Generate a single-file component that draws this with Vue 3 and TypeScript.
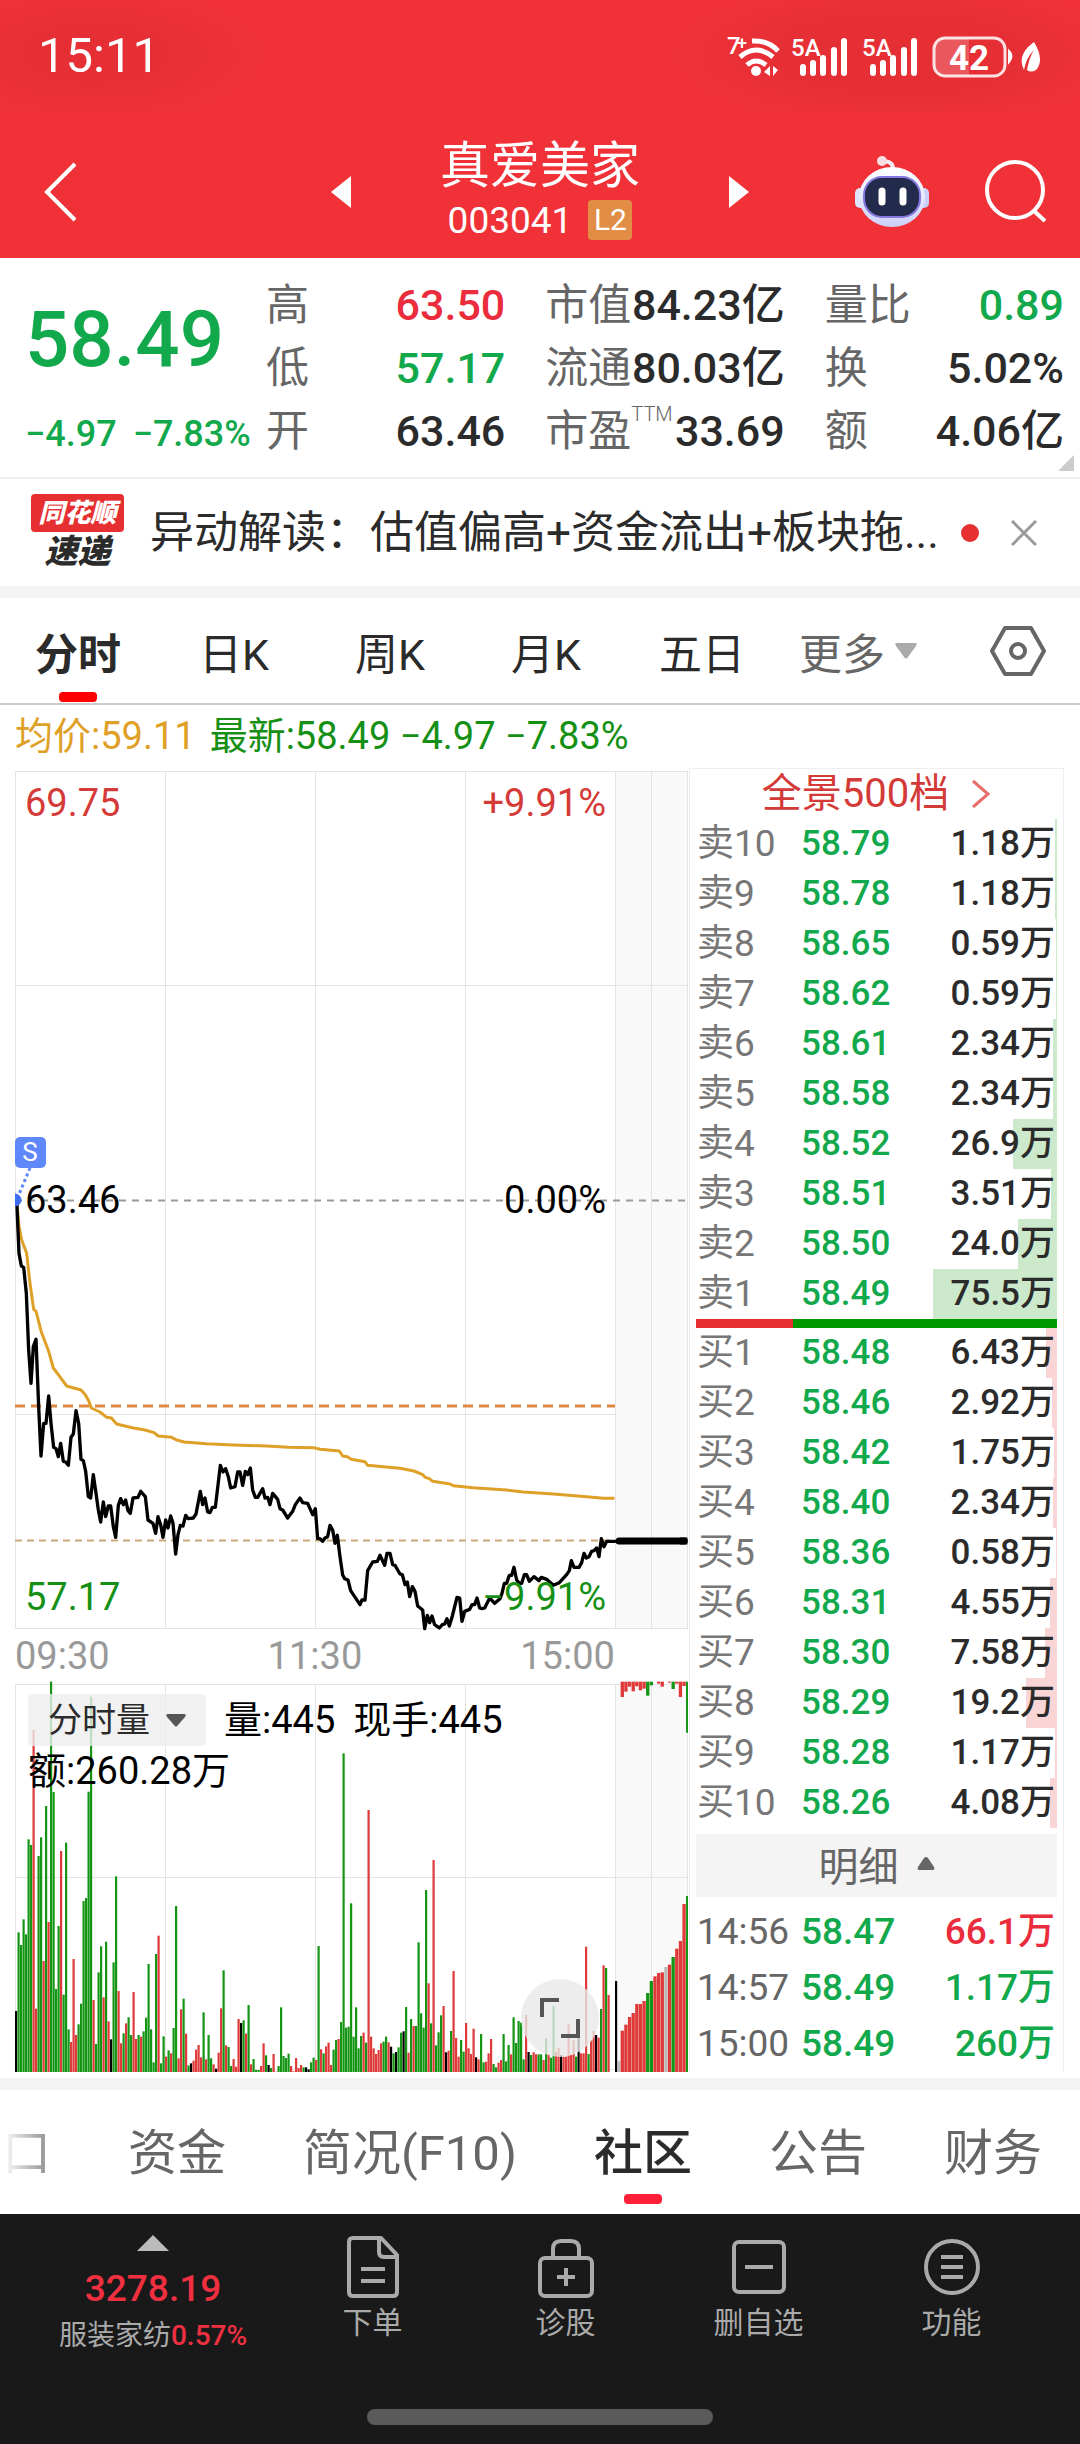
<script setup lang="ts">
import { computed, ref } from 'vue'

interface Level {
  label: string
  price: string
  volume: string
}

interface Bar {
  x: number
  y: number
  h: number
  w: number
  tone: string
}

const toneNames: Record<string, string> = { g: 'down', r: 'up', b: 'flat', s: 'idle' }

const stats = [
  { label: '高', value: '63.50', tone: 'red' },
  { label: '市值', value: '84.23亿', tone: '' },
  { label: '量比', value: '0.89', tone: 'green' },
  { label: '低', value: '57.17', tone: 'green' },
  { label: '流通', value: '80.03亿', tone: '' },
  { label: '换', value: '5.02%', tone: '' },
  { label: '开', value: '63.46', tone: '' },
  { label: '市盈', note: 'TTM', value: '33.69', tone: '' },
  { label: '额', value: '4.06亿', tone: '' },
]

const periods = ['分时', '日K', '周K', '月K', '五日']
const activePeriod = ref('分时')

const sections = ['资金', '简况(F10)', '社区', '公告', '财务']
const activeSection = ref('社区')

function levels(side: string, numbers: number[], prices: string[], volumes: string[]): Level[] {
  return numbers.map((n, i) => ({ label: side + n, price: prices[i], volume: volumes[i] }))
}

const asks = levels(
  '卖',
  [10, 9, 8, 7, 6, 5, 4, 3, 2, 1],
  ['58.79', '58.78', '58.65', '58.62', '58.61', '58.58', '58.52', '58.51', '58.50', '58.49'],
  ['1.18', '1.18', '0.59', '0.59', '2.34', '2.34', '26.9', '3.51', '24.0', '75.5'],
)
const bids = levels(
  '买',
  [1, 2, 3, 4, 5, 6, 7, 8, 9, 10],
  ['58.48', '58.46', '58.42', '58.40', '58.36', '58.31', '58.30', '58.29', '58.28', '58.26'],
  ['6.43', '2.92', '1.75', '2.34', '0.58', '4.55', '7.58', '19.2', '1.17', '4.08'],
)

const trades = [
  { time: '14:56', price: '58.47', volume: '66.1万', tone: 'red' },
  { time: '14:57', price: '58.49', volume: '1.17万', tone: 'green' },
  { time: '15:00', price: '58.49', volume: '260万', tone: 'green' },
]

function depthWidth(volume: string): string {
  return Math.max(1, Math.round(Number(volume) * 1.64)) + 'px'
}

// Line coordinates are kept at three units per pixel.
const pricePoints =
  '50,208 57,370 64,408 71,412 79,490 86,660 93,760 100,650 108,628 116,830 123,978 131,880 138,880 146,798 153,880 161,952 168,956 175,980 182,940 190,994 197,996 205,1006 213,922 220,912 228,842 236,880 243,988 250,992 257,1024 265,1100 272,1104 280,1034 288,1090 295,1140 302,1176 310,1116 317,1160 325,1128 332,1128 340,1190 347,1222 355,1126 362,1106 370,1124 377,1110 384,1142 391,1150 399,1104 414,1102 422,1084 436,1100 444,1170 459,1180 467,1210 474,1160 482,1184 489,1222 497,1170 504,1194 512,1158 519,1180 527,1272 534,1214 541,1186 549,1188 557,1156 564,1166 580,1164 588,1152 601,1084 608,1124 615,1104 623,1146 630,1148 637,1132 646,1132 661,1006 669,1026 677,1016 685,1040 692,1074 705,1070 713,1026 720,1026 728,1066 736,1024 743,1034 751,1014 758,1080 766,1102 773,1102 788,1076 795,1104 803,1102 810,1124 818,1090 833,1108 840,1136 848,1140 863,1164 878,1144 886,1124 900,1104 908,1118 923,1120 938,1154 946,1136 953,1226 960,1226 968,1234 975,1224 983,1220 990,1186 998,1200 1005,1240 1012,1216 1020,1280 1028,1335 1034,1346 1044,1350 1052,1382 1080,1424 1086,1410 1095,1410 1103,1322 1118,1296 1132,1294 1140,1276 1154,1306 1161,1270 1170,1270 1178,1304 1185,1306 1200,1332 1207,1334 1215,1364 1222,1356 1229,1400 1237,1370 1245,1384 1253,1428 1268,1440 1274,1496 1282,1456 1289,1478 1296,1458 1304,1484 1318,1494 1327,1484 1334,1482 1341,1466 1348,1488 1357,1458 1371,1402 1379,1404 1386,1474 1394,1444 1409,1438 1416,1424 1424,1424 1431,1404 1439,1434 1446,1436 1454,1434 1469,1404 1484,1420 1500,1406 1506,1390 1513,1360 1520,1360 1528,1336 1535,1336 1542,1312 1550,1350 1558,1360 1565,1360 1573,1334 1580,1334 1588,1354 1602,1340 1617,1352 1624,1342 1640,1348 1660,1366 1678,1358 1700,1334 1708,1322 1714,1292 1722,1312 1737,1312 1745,1298 1752,1270 1759,1284 1767,1280 1775,1264 1782,1262 1790,1254 1797,1280 1804,1226 1812,1250 1820,1234 1845,1234'
const averagePoints =
  '50,208 57,290 65,330 80,370 90,460 101,538 108,544 124,606 146,664 160,714 175,734 200,768 243,780 256,794 266,812 274,834 300,846 320,862 334,864 350,882 400,894 435,900 462,908 475,918 515,922 530,930 552,936 620,941 700,945 800,948 865,952 940,953 960,958 1018,963 1028,978 1042,980 1054,988 1095,995 1103,1006 1150,1010 1200,1015 1242,1023 1268,1034 1276,1042 1288,1046 1298,1054 1350,1062 1360,1067 1420,1073 1520,1080 1570,1086 1660,1092 1760,1100 1810,1105 1840,1105'

// One entry per trading minute: direction, then the y of the bar's top edge.
const minuteVolumes =
  'b1113 g877 g915 g838 g883 g598 g615 r270 r1106 g648 g592 r963 g498 r846 g125 g456 g1047 g858 r633 g1064 g608 g1168 r1206 r957 r1185 g1153 g1091 g783 g774 g455 g170 r1080 g1212 g997 g919 r1072 g905 r1144 b1198 g967 g709 r1053 r1210 g1180 r1150 g1132 g1185 r1056 r1197 g1185 r1190 g1174 g1133 g972 g1168 g1267 g942 r887 g1270 g1189 r1250 g1231 r1240 g1164 g798 r1255 r1108 g1076 r1181 g1276 b1270 r1262 r1229 r1215 r1252 g1117 r1258 g1185 g1255 r1273 b1286 r1238 r1105 g991 r1216 g1221 g1278 r1257 r1280 r1137 b1149 g1141 r1181 g1095 r1273 g1257 g1290 g1290 r1278 r1210 g1246 b1275 g1284 r1242 r1295 g1278 g1102 g1248 g1254 g1241 r1278 r1294 r1254 r1284 r1275 g1282 b1282 b1288 g1267 g1253 r1260 g918 r1228 g1240 r1219 r1208 r1275 g1229 g1200 r1197 g1146 g340 g1163 g1160 g790 g1190 g1102 g1225 g1188 r1178 g1208 r510 r1190 r1225 r1242 r1230 r1210 g1205 g1190 r1207 b1220 g1240 b1236 g1222 g1178 b1174 g1101 r1238 g1137 r1158 g1158 g907 g1120 g1163 g750 r1030 g1150 r660 g1216 g1177 g1126 r1098 b1237 r1232 g1173 r993 r1194 r1250 g1200 g1235 r1149 r1225 r1242 r1166 b1252 r1258 g1182 g1267 r1265 r1240 r1197 g1272 g1282 r1268 r1260 g1182 g1264 g1215 r1243 g1132 g1209 g1143 g1148 g1258 r1125 b1236 g1245 r1237 r1243 g1243 g1243 r1260 g1195 r1243 g1253 g1097 r1235 r1224 b1245 r1250 r1250 r1153 r1245 r1200 g1250 b1180 r1240 r1240 r920 g1242 r1200 r1173 b1185 r1193 g1107 r976 g984 r1065 x x b1023'
const auctionVolumes =
  's1263 r1172 r1154 r1131 r1119 r1092 r1092 r1083 g1059 g1023 r1009 r999 r997 s981 r974 g951 r926 r903 r792 g768'
const auctionUnmatched = 'x r171 r155 r140 r154 r139 r151 r146 g167 g136 x r131 r140 x r128 g147 r131 r171 r138 g278'

function toBars(text: string, start: number, step: number, width: number, hanging = false): Bar[] {
  return text
    .split(' ')
    .map((item, i) => {
      const edge = Number(item.slice(1))
      const x = start + i * step
      return {
        x,
        y: hanging ? 125 : edge,
        h: hanging ? edge - 125 : 1296 - edge,
        w: Math.min(width, 2064 - x),
        tone: toneNames[item[0]] ?? '',
      }
    })
    .filter((bar) => bar.tone !== '')
}

const volumeBars = computed<Bar[]>(() => [
  ...toBars(minuteVolumes, 45, 7.5, 6.6),
  ...toBars(auctionVolumes, 1851, 10.9, 10),
  ...toBars(auctionUnmatched, 1851, 10.9, 10, true),
])
</script>

<template>
  <div class="page">
    <header class="top">
      <div class="status">
        <span class="clock">15:11</span>
        <svg class="status-icons" viewBox="720 30 324 52" aria-hidden="true">
          <g fill="#fff">
            <text x="727" y="54" font-size="24" font-weight="500">7</text>
            <text x="737" y="49" font-size="18" font-weight="500">+</text>
            <text x="791" y="56" font-size="24" font-weight="500">5A</text>
            <text x="862" y="56" font-size="24" font-weight="500">5A</text>
            <circle cx="756" cy="71" r="5" />
            <path d="M770 66v10l-6-4zM773 66v10l5-6z" />
          </g>
          <g fill="none" stroke="#fff" stroke-width="5">
            <path d="M752 41q16-1 26 10" />
            <path d="M740 57q16-14 33 0" />
            <path d="M747 65q9-8 19 0" />
          </g>
          <g stroke="#fff" stroke-width="6" stroke-linecap="round">
            <path d="M803 67v6M813 63v10M823 58v15M834 50v23M844 41v32" />
            <path d="M873 67v6M883 63v10M893 58v15M904 50v23M914 41v32" />
          </g>
          <path d="M945 38h24v38h-24q-10 0-10-10V48q0-10 10-10z" fill="#fff" opacity=".2" />
          <rect x="934" y="38" width="71" height="38" rx="11" fill="none" stroke="#fff" stroke-opacity=".85" stroke-width="3" />
          <text x="969" y="70" font-size="35" font-weight="700" text-anchor="middle" fill="#fff">42</text>
          <path d="M1009 51q5 5 0 11z" fill="#fff" stroke="#fff" stroke-width="2" />
          <path d="M1034 42Q1045 60 1036 70Q1031 73 1027 70Q1029 58 1034 50Q1026 58 1024 70Q1016 55 1034 42z" fill="#fff" />
        </svg>
      </div>
      <div class="titlebar">
        <button class="icon-button" type="button" aria-label="返回">
          <svg width="34" height="60" viewBox="0 0 34 60"><path d="M31 2L3 30L31 58" fill="none" stroke="#fff" stroke-width="4" /></svg>
        </button>
        <button class="icon-button" type="button" aria-label="上一只">
          <svg width="20" height="32" viewBox="0 0 20 32"><path d="M20 0v32L0 16z" fill="#fff" /></svg>
        </button>
        <div class="title">
          <h1>真爱美家</h1>
          <div class="code"><span>003041</span><span class="badge">L2</span></div>
        </div>
        <button class="icon-button" type="button" aria-label="下一只">
          <svg width="20" height="32" viewBox="0 0 20 32"><path d="M0 0v32l20-16z" fill="#fff" /></svg>
        </button>
        <div class="tools">
          <button class="icon-button" type="button" aria-label="智能助手">
            <svg width="76" height="72" viewBox="0 0 76 72">
              <defs>
                <linearGradient id="shell" x1="0" y1="0" x2="0" y2="1">
                  <stop offset="0" stop-color="#fff" />
                  <stop offset="1" stop-color="#cdd0f8" />
                </linearGradient>
              </defs>
              <path d="M39 14q1-8-9-9" fill="none" stroke="#f3e9f2" stroke-width="4" />
              <circle cx="28" cy="5" r="5" fill="#f9dfe4" />
              <rect x="1" y="32" width="12" height="20" rx="5" fill="#dfe2fb" />
              <rect x="63" y="32" width="12" height="20" rx="5" fill="#c9cff5" />
              <ellipse cx="38" cy="41" rx="33" ry="30" fill="url(#shell)" />
              <rect x="9" y="20" width="58" height="42" rx="19" fill="#8577e2" />
              <rect x="11" y="22" width="54" height="38" rx="17" fill="#222b4b" />
              <path d="M28 35v11M49 35v11" stroke="#fff" stroke-width="7" stroke-linecap="round" />
            </svg>
          </button>
          <button class="icon-button" type="button" aria-label="搜索">
            <svg width="64" height="66" viewBox="0 0 64 66">
              <g fill="none" stroke="#fff" stroke-width="4"><circle cx="31" cy="31" r="28" /><path d="M50 52l11 10" /></g>
            </svg>
          </button>
        </div>
      </div>
    </header>

    <main>
      <section class="quote">
        <div class="last">
          <div class="last-price">58.49</div>
          <div class="change"><span>−4.97</span><span>−7.83%</span></div>
        </div>
        <dl class="stats">
          <div v-for="s in stats" :key="s.label" class="stat">
            <dt>{{ s.label }}<sup v-if="s.note">{{ s.note }}</sup></dt>
            <dd :class="s.tone">{{ s.value }}</dd>
          </div>
        </dl>
        <i class="corner"></i>
      </section>

      <section class="news">
        <div class="brand"><span class="brand-top">同花顺</span><span class="brand-bottom">速递</span></div>
        <a class="headline" href="#news">异动解读：估值偏高+资金流出+板块拖...</a>
        <i class="dot"></i>
        <button class="icon-button" type="button" aria-label="关闭">
          <svg width="26" height="26" viewBox="0 0 26 26"><path d="M1 1l24 24M25 1L1 25" stroke="#999" stroke-width="3" /></svg>
        </button>
      </section>

      <nav class="periods">
        <button
          v-for="p in periods"
          :key="p"
          type="button"
          :class="{ active: p === activePeriod }"
          @click="activePeriod = p"
        >{{ p }}</button>
        <button class="more" type="button">更多
          <svg width="22" height="16" viewBox="0 0 22 16"><path d="M2 0h18q3 0 1 3l-8 11q-2 3-4 0L1 3Q-1 0 2 0z" fill="#aaa" /></svg>
        </button>
        <button class="settings" type="button" aria-label="设置">
          <svg width="56" height="50" viewBox="0 0 56 50">
            <g fill="none" stroke="#666" stroke-width="4" stroke-linejoin="round"><path d="M15 2h26l13 23l-13 23H15L2 25z" /><circle cx="28" cy="25" r="7" /></g>
          </svg>
        </button>
      </nav>

      <section class="market">
        <div class="legend"><span class="avg">均价:59.11</span><span class="now">最新:58.49 −4.97 −7.83%</span></div>
        <div class="panes">
          <div class="charts">
            <svg class="chart" viewBox="0 0 674 864" role="img" aria-label="分时走势">
              <rect x="600" y="3" width="73" height="858" fill="#f9f9f9" />
              <g class="grid">
                <path d="M0 3.5h673M0 217.5h673M0 646.5h600M0 860.5h673" />
                <path d="M.5 3v858M150.5 3v858M300.5 3v858M450.5 3v858M600.5 3v858M636.5 3v858M672.5 3v858" />
              </g>
              <path d="M0 432.5h673" stroke="#999" stroke-width="2" stroke-dasharray="7 6" />
              <path d="M0 638h600" stroke="#df8840" stroke-width="3" stroke-dasharray="10 6" />
              <path d="M0 772.5h600" stroke="#c9a87c" stroke-width="2" stroke-dasharray="7 5" />
              <g transform="translate(-15 362) scale(.33333)" fill="none" stroke-linejoin="round" stroke-linecap="round">
                <polyline :points="averagePoints" stroke="#dfa028" stroke-width="9" />
                <polyline :points="pricePoints" stroke="#000" stroke-width="10" />
                <path d="M1857 1233h196" stroke="#000" stroke-width="21" />
                <path d="M2040 1233h22" stroke="#000" stroke-width="21" stroke-linecap="butt" />
              </g>
              <path d="M15 400L2 431" stroke="#5d84f5" stroke-width="3" stroke-dasharray="3 3" />
              <path d="M0 426a6 6 0 0 1 0 12z" fill="#3f6df0" stroke="#3f6df0" />
              <rect x="0" y="369" width="31" height="31" rx="5" fill="#5f88fb" />
              <text x="15" y="393" font-size="26" text-anchor="middle" fill="#fff">S</text>
              <g font-size="38">
                <text x="10" y="48" fill="#d43a38">69.75</text>
                <text x="591" y="48" fill="#d43a38" text-anchor="end">+9.91%</text>
                <text x="10" y="445">63.46</text>
                <text x="591" y="445" text-anchor="end">0.00%</text>
                <text x="10" y="842" fill="#159015">57.17</text>
                <text x="591" y="842" fill="#159015" text-anchor="end">−9.91%</text>
              </g>
            </svg>
            <div class="times"><span>09:30</span><span>11:30</span><span>15:00</span></div>
            <div class="volume">
              <svg class="chart" viewBox="0 0 674 392" role="img" aria-label="分时量">
                <rect x="600" y="4" width="73" height="388" fill="#f9f9f9" />
                <g class="grid">
                  <path d="M0 4.5h673M0 197.5h673M0 389.5h673" />
                  <path d="M.5 4v388M150.5 4v388M300.5 4v388M450.5 4v388M600.5 4v388M636.5 4v388M672.5 4v388" />
                </g>
                <g transform="translate(-15 -40) scale(.33333)">
                  <rect v-for="(b, i) in volumeBars" :key="i" :x="b.x" :y="b.y" :width="b.w" :height="b.h" :class="b.tone" />
                </g>
              </svg>
              <div class="readout">
                <button class="indicator" type="button">分时量
                  <svg width="20" height="13" viewBox="0 0 20 13"><path d="M2 0h16q3 0 1 3l-7 8q-2 3-4 0L1 3Q-1 0 2 0z" fill="#555" /></svg>
                </button>
                <span>量:445</span>
                <span>现手:445</span>
                <span class="amount">额:260.28万</span>
              </div>
              <button class="expand" type="button" aria-label="全屏">
                <svg width="40" height="40" viewBox="0 0 40 40"><path d="M2 19V2h17M21 38h17V21" fill="none" stroke="#555" stroke-width="4" /></svg>
              </button>
            </div>
          </div>

          <aside class="book">
            <a class="depth-link" href="#depth">全景500档
              <svg width="20" height="30" viewBox="0 0 20 30"><path d="M2 2l15 13L2 28" fill="none" stroke="#e8706b" stroke-width="3" /></svg>
            </a>
            <table class="levels asks">
              <tbody>
                <tr v-for="l in asks" :key="l.label">
                  <th scope="row">{{ l.label }}</th>
                  <td class="price green">{{ l.price }}</td>
                  <td class="size"><i class="depth" :style="{ width: depthWidth(l.volume) }"></i><span>{{ l.volume }}万</span></td>
                </tr>
              </tbody>
            </table>
            <div class="ratio"><i></i></div>
            <table class="levels bids">
              <tbody>
                <tr v-for="l in bids" :key="l.label">
                  <th scope="row">{{ l.label }}</th>
                  <td class="price green">{{ l.price }}</td>
                  <td class="size"><i class="depth" :style="{ width: depthWidth(l.volume) }"></i><span>{{ l.volume }}万</span></td>
                </tr>
              </tbody>
            </table>
            <button class="detail" type="button">明细
              <svg width="18" height="13" viewBox="0 0 18 13"><path d="M7 1q2-2 4 0l6 9q1 3-1 3H2q-2 0-1-3z" fill="#666" /></svg>
            </button>
            <table class="levels trades">
              <tbody>
                <tr v-for="t in trades" :key="t.time">
                  <th scope="row">{{ t.time }}</th>
                  <td class="price green">{{ t.price }}</td>
                  <td class="size" :class="t.tone">{{ t.volume }}</td>
                </tr>
              </tbody>
            </table>
          </aside>
        </div>
      </section>

      <nav class="sections">
        <button class="faded" type="button">口</button>
        <button
          v-for="s in sections"
          :key="s"
          type="button"
          :class="{ active: s === activeSection }"
          @click="activeSection = s"
        >{{ s }}</button>
      </nav>
    </main>

    <footer class="dock">
      <div class="actions">
        <button class="index" type="button">
          <svg width="32" height="16" viewBox="0 0 32 16"><path d="M16 0l16 16H0z" fill="#bbb" /></svg>
          <span class="index-value">3278.19</span>
          <span class="index-name">服装家纺<b>0.57%</b></span>
        </button>
        <button type="button">
          <svg width="60" height="64" viewBox="0 0 60 64">
            <g class="line"><path d="M38 3H10q-4 0-4 4v50q0 4 4 4h40q4 0 4-4V20zM36 3v14q0 5 5 5h12M18 34h24M18 46h24" /></g>
          </svg>
          <span>下单</span>
        </button>
        <button type="button">
          <svg width="60" height="64" viewBox="0 0 60 64">
            <g class="line"><rect x="4" y="23" width="52" height="38" rx="5" /><path d="M17 22v-8q0-8 8-8h10q8 0 8 8v8M30 33v18M21 42h18" /></g>
          </svg>
          <span>诊股</span>
        </button>
        <button type="button">
          <svg width="60" height="64" viewBox="0 0 60 64">
            <g class="line"><rect x="5" y="7" width="50" height="50" rx="5" /><path d="M16 32h28" /></g>
          </svg>
          <span>删自选</span>
        </button>
        <button type="button">
          <svg width="60" height="64" viewBox="0 0 60 64">
            <g class="line"><circle cx="30" cy="32" r="26" /><path d="M19 22h22M19 32h22M19 42h22" /></g>
          </svg>
          <span>功能</span>
        </button>
      </div>
      <div class="home"></div>
    </footer>
  </div>
</template>

<style>
body {
  margin: 0;
  background: #fff;
}
</style>

<style scoped>
.page {
  font-family: Roboto, "Noto Sans CJK SC", sans-serif;
  color: #2b2b2b;
  background: #fff;
}
button {
  font: inherit;
  color: inherit;
  background: none;
  border: 0;
  padding: 0;
  cursor: pointer;
}
a {
  color: inherit;
  text-decoration: none;
}
svg {
  display: block;
  flex: none;
}
.icon-button {
  display: flex;
}
.red {
  color: #ea2c3c;
}
.green {
  color: #12a84c;
}

/* header */
.top {
  height: 258px;
  background: #f03238;
  color: #fff;
}
.status {
  display: flex;
  align-items: center;
  justify-content: space-between;
  height: 112px;
  padding: 0 36px 0 38px;
  background:
    radial-gradient(ellipse 170px 70px at 96px 54px, #e62f35 40%, transparent),
    radial-gradient(ellipse 230px 74px at calc(100% - 180px) 54px, #e52f35 50%, transparent);
}
.clock {
  font-size: 49px;
  line-height: 112px;
}
.status-icons {
  width: 324px;
  height: 52px;
}
.titlebar {
  display: grid;
  grid-template-columns: 287fr 20px 378px 20px 299fr;
  align-items: center;
  padding: 24px 32px 0 44px;
}
.title {
  text-align: center;
}
.title h1 {
  margin: 4px 0 0;
  font-size: 50px;
  font-weight: 400;
  line-height: 52px;
}
.code {
  display: flex;
  align-items: center;
  justify-content: center;
  gap: 16px;
  height: 56px;
  font-size: 37px;
}
.badge {
  width: 44px;
  border-radius: 4px;
  background: #e18d46;
  font-size: 30px;
  line-height: 40px;
}
.tools {
  display: flex;
  align-items: center;
  justify-content: flex-end;
  gap: 54px;
}

/* quote */
.quote {
  position: relative;
  display: flex;
  height: 221px;
  padding: 0 16px 0 25px;
  border-bottom: 2px solid #eee;
  box-sizing: border-box;
}
.last {
  flex: none;
  width: 241px;
  padding-top: 36px;
  color: #12a84c;
  white-space: nowrap;
}
.last-price {
  font-size: 78px;
  font-weight: 500;
  line-height: 92px;
}
.change {
  display: flex;
  gap: 16px;
  margin-top: 24px;
  font-size: 36px;
  font-weight: 500;
  line-height: 48px;
}
.stats {
  flex: 1;
  display: grid;
  grid-template-columns: repeat(3, 1fr);
  grid-auto-rows: 63px;
  column-gap: 40px;
  margin: 16px 0 0;
  font-size: 43px;
  line-height: 63px;
}
.stat {
  display: flex;
  justify-content: space-between;
  white-space: nowrap;
}
dt {
  display: flex;
  color: #666;
}
dd {
  margin: 0;
  font-weight: 500;
}
sup {
  font-size: 20px;
  font-weight: 300;
  line-height: 28px;
}
.corner {
  position: absolute;
  right: 6px;
  bottom: 6px;
  border-left: 16px solid transparent;
  border-bottom: 16px solid #ccc;
}

/* news */
.news {
  display: flex;
  align-items: center;
  height: 107px;
  padding: 0 43px 0 31px;
  border-bottom: 12px solid #f4f4f4;
}
.brand {
  display: flex;
  flex-direction: column;
  align-items: center;
  width: 93px;
  margin-right: 26px;
  font-style: italic;
  font-weight: 900;
}
.brand-top {
  width: 93px;
  border-radius: 4px;
  background: #e62f30;
  color: #fff;
  font-size: 26px;
  line-height: 38px;
  text-align: center;
}
.brand-bottom {
  font-size: 33px;
  line-height: 40px;
}
.headline {
  flex: 1;
  font-size: 44px;
  line-height: 64px;
  white-space: nowrap;
}
.dot {
  width: 18px;
  height: 18px;
  margin-right: 32px;
  border-radius: 50%;
  background: #e62f30;
}

/* period tabs */
.periods {
  display: grid;
  grid-template-columns: repeat(6, 156fr) 144fr;
  height: 105px;
  border-bottom: 2px solid #ccc;
  font-size: 43px;
}
.periods button {
  position: relative;
  display: flex;
  align-items: center;
  justify-content: center;
  gap: 10px;
}
.periods .active {
  font-weight: 700;
}
.active::after {
  content: "";
  position: absolute;
  left: 50%;
  bottom: 1px;
  width: 38px;
  height: 10px;
  margin-left: -19px;
  border-radius: 4px;
  background: #f00;
}
.periods .more {
  color: #666;
}
.periods .settings {
  padding-left: 20px;
}

/* market */
.market {
  border-bottom: 12px solid #f4f4f4;
  padding-bottom: 6px;
}
.legend {
  display: flex;
  gap: 14px;
  padding-left: 15px;
  font-size: 38px;
  line-height: 63px;
}
.avg {
  color: #dfa028;
}
.now {
  color: #159015;
}
.panes {
  display: grid;
  grid-template-columns: minmax(0, 674fr) minmax(0, 375fr);
  padding: 0 16px 0 15px;
}
.chart {
  width: 100%;
  height: auto;
}
.grid path {
  fill: none;
  stroke: #e4e4e4;
}
.times {
  display: flex;
  justify-content: space-between;
  width: 89%;
  height: 48px;
  color: #999;
  font-size: 38px;
  line-height: 48px;
}
.volume {
  position: relative;
}
.up {
  fill: #df3a3a;
}
.down {
  fill: #149514;
}
.flat {
  fill: #000;
}
.idle {
  fill: #bbb;
}
.readout {
  position: absolute;
  top: 14px;
  left: 13px;
  display: flex;
  flex-wrap: wrap;
  align-items: center;
  column-gap: 18px;
  width: 560px;
  color: #000;
  font-size: 38px;
  line-height: 50px;
}
.indicator {
  display: flex;
  align-items: center;
  justify-content: center;
  gap: 16px;
  width: 178px;
  height: 52px;
  border-radius: 4px;
  background: rgba(238, 238, 238, 0.8);
  color: #2b2b2b;
  font-size: 34px;
}
.amount {
  flex-basis: 100%;
}
.expand {
  position: absolute;
  right: 90px;
  bottom: 15px;
  display: flex;
  align-items: center;
  justify-content: center;
  width: 78px;
  height: 78px;
  border-radius: 50%;
  background: rgba(232, 232, 232, 0.8);
}

/* order book */
.book {
  padding: 0 6px;
  border: 1px solid #eee;
  border-bottom: 0;
}
.depth-link {
  display: flex;
  align-items: center;
  justify-content: center;
  gap: 22px;
  height: 50px;
  color: #d43a38;
  font-size: 40px;
  line-height: 48px;
}
.levels {
  width: 100%;
  table-layout: fixed;
  border-collapse: collapse;
  font-size: 35px;
  line-height: 50px;
  white-space: nowrap;
}
.levels th,
.levels td {
  height: 50px;
  padding: 0;
}
.levels th {
  width: 104px;
  padding-left: 1px;
  color: #777;
  font-size: 37px;
  font-weight: 400;
  text-align: left;
}
.levels .price {
  width: 110px;
  font-weight: 500;
}
.levels .size {
  position: relative;
  padding-right: 2px;
  font-weight: 500;
  text-align: right;
}
.size span {
  position: relative;
}
.depth {
  position: absolute;
  top: 0;
  right: 0;
  bottom: 0;
}
.asks .depth {
  background: #cce9cc;
}
.bids .depth {
  background: #fad5d5;
}
.ratio {
  height: 9px;
  background: #009a00;
}
.ratio i {
  display: block;
  width: 27%;
  height: 100%;
  background: #e62f30;
}
.detail {
  display: flex;
  align-items: center;
  justify-content: center;
  gap: 18px;
  width: 100%;
  height: 63px;
  margin: 6px 0 7px;
  padding-bottom: 4px;
  background: #f4f4f4;
  color: #666;
  font-size: 40px;
}
.trades {
  font-size: 37px;
}
.trades th,
.trades td {
  height: 56px;
}
.trades th {
  color: #666;
}

/* section tabs */
.sections {
  display: flex;
  justify-content: flex-end;
  gap: 77px;
  height: 124px;
  padding-right: 38px;
  overflow: hidden;
  color: #666;
  font-size: 49px;
}
.sections button {
  position: relative;
  flex: none;
  padding-bottom: 8px;
}
.sections .active {
  color: #2b2b2b;
  font-weight: 500;
}
.sections .active::after {
  bottom: 10px;
  background: #ff2038;
}
.sections .faded {
  color: transparent;
  background: linear-gradient(90deg, #fff, #888);
  background-clip: text;
}

/* dock */
.dock {
  height: 230px;
  background: #191919;
  color: #aaa;
}
.actions {
  display: grid;
  grid-template-columns: 276fr repeat(4, 193fr);
  height: 195px;
  padding-right: 32px;
}
.actions button {
  display: flex;
  flex-direction: column;
  align-items: center;
  padding-top: 21px;
  gap: 4px;
  font-size: 30px;
  line-height: 40px;
}
.actions .index {
  padding-left: 30px;
  gap: 0;
}
.index-value {
  margin-top: 18px;
  color: #f03040;
  font-size: 37px;
  font-weight: 500;
  line-height: 40px;
}
.index-name {
  margin-top: 7px;
  font-size: 28px;
}
.index-name b {
  color: #f03040;
  font-weight: 500;
}
.line {
  fill: none;
  stroke: #aaa;
  stroke-width: 4;
}
.home {
  width: 32%;
  height: 16px;
  margin: 0 auto;
  border-radius: 8px;
  background: #5a5a5a;
}
</style>
